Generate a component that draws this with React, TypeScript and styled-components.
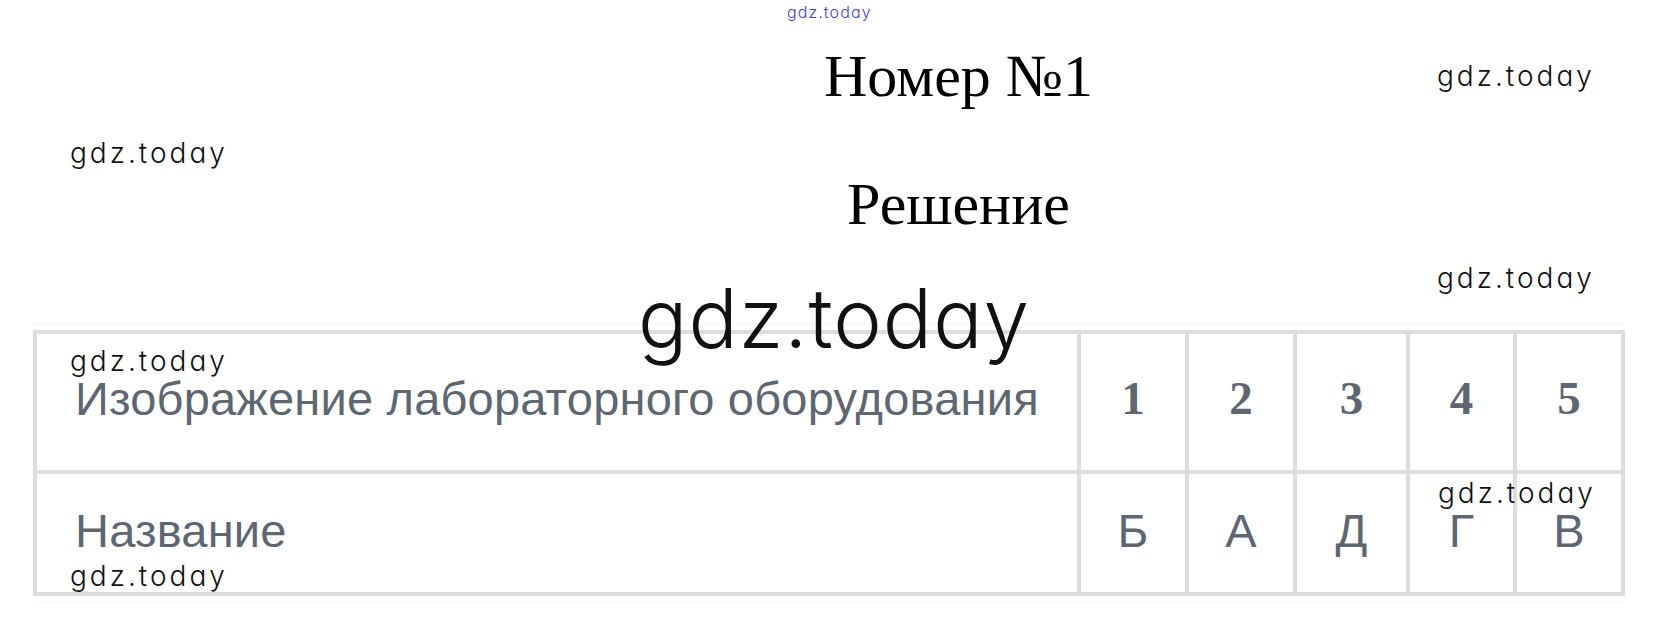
import React from "react";
import styled, { createGlobalStyle } from "styled-components";

const GlobalStyle = createGlobalStyle`
  html, body {
    margin: 0;
    padding: 0;
    background: #ffffff;
  }
  body {
    font-family: "Liberation Serif", "Times New Roman", serif;
  }
`;

const Page = styled.main`
  position: relative;
  width: 1657px;
  height: 624px;
  overflow: hidden;
  background: #ffffff;
`;

const Header = styled.header`
  display: flex;
  flex-direction: column;
  align-items: center;
  padding: 42px 0 0 260px;
`;

const Title = styled.h1<{ $gap?: number }>`
  margin: ${(p) => p.$gap ?? 0}px 0 0;
  font-family: "Liberation Serif", "Times New Roman", serif;
  font-weight: 400;
  font-size: 60px;
  line-height: 69px;
  color: #000000;
`;

const Frame = styled.figure`
  margin: 84px 0 0 33px;
  padding: 6px 0;
  width: 1592px;
  border-top: 1px solid #f8f8f8;
  border-bottom: 1px solid #f8f8f8;
`;

const Grid = styled.div`
  display: grid;
  grid-template-columns: 1040px 104px 104px 109px 103px 104px;
  grid-template-rows: 136px 118px;
  gap: 4px;
  padding: 4px;
  background: #dddddd;
`;

const Cell = styled.div<{ $align?: "left" | "center"; $serif?: boolean; $lift: number }>`
  display: flex;
  align-items: center;
  justify-content: ${(p) => (p.$align === "left" ? "flex-start" : "center")};
  padding: 0 0 ${(p) => p.$lift}px ${(p) => (p.$align === "left" ? "38px" : "0")};
  background: #ffffff;
  font-family: ${(p) =>
    p.$serif
      ? '"Liberation Serif", "Times New Roman", serif'
      : '"Liberation Sans", Arial, sans-serif'};
  font-weight: ${(p) => (p.$serif ? 700 : 400)};
  font-size: 47px;
  letter-spacing: ${(p) => (p.$align === "left" ? "0.2px" : "0")};
  color: #5e6771;
  white-space: nowrap;
`;

const Mark = styled.span<{ $size: number; $spacing: number; $blue?: boolean }>`
  position: absolute;
  font-family: Inter, "Noto Sans", sans-serif;
  font-feature-settings: "cv11" 1;
  font-weight: 300;
  font-size: ${(p) => p.$size}px;
  line-height: 1;
  letter-spacing: ${(p) => p.$spacing}px;
  color: ${(p) => (p.$blue ? "#3d3dda" : "#111111")};
  white-space: nowrap;
  pointer-events: none;
`;

const marks: { x: number; y: number; size: number; spacing: number; blue?: boolean }[] = [
  { x: 787, y: 4, size: 16, spacing: 1.1, blue: true },
  { x: 1437, y: 62, size: 28, spacing: 3.0 },
  { x: 70, y: 139, size: 28, spacing: 3.0 },
  { x: 1437, y: 264, size: 28, spacing: 3.0 },
  { x: 638, y: 278, size: 82, spacing: 1.0 },
  { x: 70, y: 347, size: 28, spacing: 3.0 },
  { x: 1438, y: 479, size: 28, spacing: 3.0 },
  { x: 70, y: 562, size: 28, spacing: 3.0 },
];

const topRow = ["1", "2", "3", "4", "5"];
const bottomRow = ["Б", "А", "Д", "Г", "В"];

export default function App() {
  return (
    <>
      <GlobalStyle />
      <Page>
        <Header>
          <Title>Номер №1</Title>
          <Title as="h2" $gap={59}>
            Решение
          </Title>
        </Header>
        <Frame>
          <Grid>
            <Cell $align="left" $lift={8}>
              Изображение лабораторного оборудования
            </Cell>
            {topRow.map((n) => (
              <Cell key={n} $serif $lift={8}>
                {n}
              </Cell>
            ))}
            <Cell $align="left" $lift={6}>
              Название
            </Cell>
            {bottomRow.map((l) => (
              <Cell key={l} $lift={6}>
                {l}
              </Cell>
            ))}
          </Grid>
        </Frame>
        {marks.map((m, i) => (
          <Mark
            key={i}
            $size={m.size}
            $spacing={m.spacing}
            $blue={m.blue}
            style={{ left: m.x, top: m.y }}
          >
            gdz.today
          </Mark>
        ))}
      </Page>
    </>
  );
}
